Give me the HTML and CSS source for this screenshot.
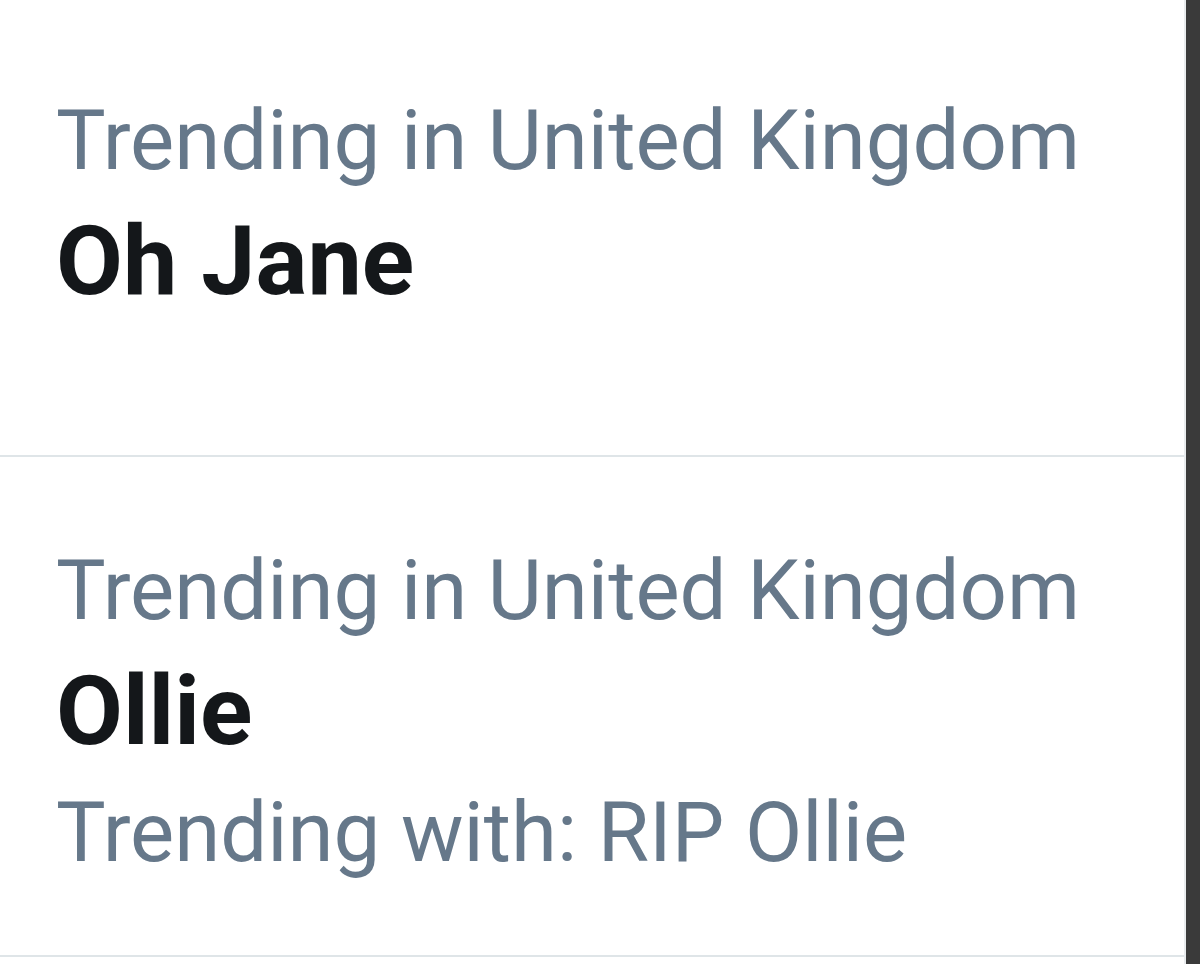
FILE: index.html
```html
<!DOCTYPE html>
<html lang="en">
<head>
<meta charset="utf-8">
<title>Trends</title>
<link rel="stylesheet" href="styles.css">
</head>
<body>
<div class="screen">
  <main class="feed">
    <section class="trend trend-first">
      <div class="context">Trending in United Kingdom</div>
      <div class="name">Oh Jane</div>
    </section>
    <section class="trend trend-second">
      <div class="context">Trending in United Kingdom</div>
      <div class="name">Ollie</div>
      <div class="context with">Trending with: RIP Ollie</div>
    </section>
  </main>
  <div class="edge"></div>
</div>
</body>
</html>
```

FILE: styles.css
```css
html, body {
  margin: 0;
  padding: 0;
  background: #ffffff;
}
body {
  font-family: Roboto, "Noto Sans", "Liberation Sans", sans-serif;
}
.screen {
  display: flex;
  width: 1200px;
  height: 964px;
  overflow: hidden;
}
.feed {
  flex: 1;
  background: #ffffff;
  border-right: 2px solid #e9ecee;
}
.edge {
  width: 14px;
  background: #3a3a3a;
}
.trend {
  padding-left: 56px;
  border-bottom: 2px solid #dfe5e8;
}
.trend-first {
  padding-top: 81px;
  padding-bottom: 134px;
}
.trend-second {
  padding-top: 74px;
  padding-bottom: 60px;
}
.context {
  font-size: 83.3px;
  line-height: 120px;
  color: #66788a;
  font-weight: 400;
}
.context.with {
  line-height: 124px;
}
.name {
  font-size: 97px;
  line-height: 120px;
  font-weight: 700;
  color: #14171a;
}
```
